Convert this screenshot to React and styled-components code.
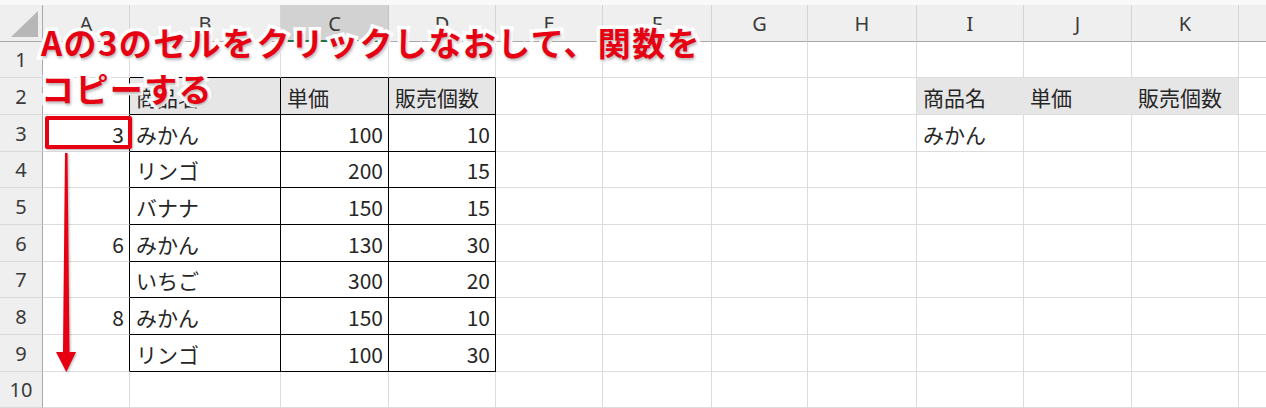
import React from 'react';
import styled, { createGlobalStyle } from 'styled-components';

const GlobalStyle = createGlobalStyle`
  html, body { margin: 0; padding: 0; background: #ffffff; }
  body {
    width: 1266px;
    height: 408px;
    overflow: hidden;
    font-family: "Noto Sans CJK JP", "Noto Sans", sans-serif;
  }
`;

const COLS = ['A', 'B', 'C', 'D', 'E', 'F', 'G', 'H', 'I', 'J', 'K', 'L'];
const COL_W = [87, 151, 108, 107, 107, 109, 96, 109, 107, 108, 107, 110];
const ROW_H = [36, 37, 37, 36, 37, 37, 36, 37, 37, 36];
const SELECTED_COL = 2;

const GRID = '#dcdcdc';
const BLACK = '#000000';
const FILL = '#e7e6e6';

// data[row][col] ; row 0 = sheet row 1
const DATA = [
  {},
  { 1: '商品名', 2: '単価', 3: '販売個数', 8: '商品名', 9: '単価', 10: '販売個数' },
  { 0: 3, 1: 'みかん', 2: 100, 3: 10, 8: 'みかん' },
  { 1: 'リンゴ', 2: 200, 3: 15 },
  { 1: 'バナナ', 2: 150, 3: 15 },
  { 0: 6, 1: 'みかん', 2: 130, 3: 30 },
  { 1: 'いちご', 2: 300, 3: 20 },
  { 0: 8, 1: 'みかん', 2: 150, 3: 10 },
  { 1: 'リンゴ', 2: 100, 3: 30 },
  {},
];

const inTable = (r, c) => r >= 1 && r <= 8 && c >= 1 && c <= 3;
const isFilled = (r, c) => r === 1 && ((c >= 1 && c <= 3) || (c >= 8 && c <= 10));

const Viewport = styled.div`
  position: relative;
  width: 1266px;
  height: 408px;
  overflow: hidden;
  background: #ffffff;
`;

const TopStrip = styled.div`
  height: 5px;
  background: #f9f9f9;
`;

const Grid = styled.div`
  display: grid;
  grid-template-columns: 43px ${COL_W.map((w) => `${w}px`).join(' ')};
  grid-template-rows: 37px ${ROW_H.map((h) => `${h}px`).join(' ')};
  width: max-content;
`;

const Corner = styled.div`
  box-sizing: border-box;
  background: #efefef;
  border-right: 1px solid #a9a9a9;
  border-bottom: 1px solid #a9a9a9;
  display: flex;
  align-items: flex-end;
  justify-content: flex-end;
  padding: 0 4px 4px 0;
`;

const ColHeader = styled.div`
  box-sizing: border-box;
  display: flex;
  align-items: center;
  justify-content: center;
  background: ${(p) => (p.$selected ? '#d2d2d2' : '#efefef')};
  border-right: 1px solid ${(p) => (p.$selected ? '#c2c2c2' : '#d4d4d4')};
  border-bottom: ${(p) => (p.$selected ? '2px solid #217346' : '1px solid #a9a9a9')};
  font-family: "Noto Sans", "Open Sans", sans-serif;
  font-size: 20px;
  color: #3a3a3a;
  padding-top: 1px;
`;

const RowHeader = styled.div`
  box-sizing: border-box;
  display: flex;
  align-items: center;
  justify-content: center;
  background: #efefef;
  border-right: 1px solid #a9a9a9;
  border-bottom: 1px solid #d9d9d9;
  font-family: "Noto Sans", "Open Sans", sans-serif;
  font-size: 20px;
  color: #3a3a3a;
`;

const Cell = styled.div`
  box-sizing: border-box;
  display: flex;
  align-items: center;
  justify-content: ${(p) => (p.$numeric ? 'flex-end' : 'flex-start')};
  padding: 1px 5px 0 6px;
  background: ${(p) => (p.$fill ? FILL : '#ffffff')};
  border-right: 1px solid ${(p) => p.$right};
  border-bottom: 1px solid ${(p) => p.$bottom};
  font-family: "Noto Sans CJK JP", sans-serif;
  font-size: 21px;
  color: #262626;
  white-space: nowrap;
`;

const Callout = styled.div`
  position: absolute;
  left: 41px;
  top: 19px;
  font-family: "Noto Sans CJK JP", sans-serif;
  font-weight: 700;
  font-size: 33px;
  line-height: 46px;
  letter-spacing: 1.4px;
  color: #e60012;
  -webkit-text-stroke: 7px #ffffff;
  paint-order: stroke fill;
  text-shadow: 1px 2px 3px rgba(0, 0, 0, 0.3);
  white-space: pre;
`;

const SelectBox = styled.div`
  position: absolute;
  left: 45px;
  top: 116px;
  width: 87px;
  height: 33px;
  box-sizing: border-box;
  border: 4px solid #e60012;
  border-radius: 2px;
  box-shadow: 1px 1px 2px rgba(0, 0, 0, 0.3);
`;

const ArrowWrap = styled.svg`
  position: absolute;
  left: 55px;
  top: 150px;
  overflow: visible;
`;

function cellBorders(r, c) {
  let right = GRID;
  let bottom = GRID;
  if (inTable(r, c) || inTable(r, c + 1)) right = BLACK;
  else if (isFilled(r, c) && isFilled(r, c + 1)) right = FILL;
  if (inTable(r, c) || inTable(r + 1, c)) bottom = BLACK;
  return { right, bottom };
}

export default function App() {
  const cells = [];
  cells.push(
    <Corner key="corner">
      <svg width="27" height="26" viewBox="0 0 27 26">
        <polygon points="27,0 27,26 0,26" fill="#b7b7b7" />
      </svg>
    </Corner>
  );
  COLS.forEach((c, i) => {
    cells.push(
      <ColHeader key={`h${c}`} $selected={i === SELECTED_COL}>
        {c}
      </ColHeader>
    );
  });
  ROW_H.forEach((_, r) => {
    cells.push(<RowHeader key={`r${r}`}>{r + 1}</RowHeader>);
    COLS.forEach((_, c) => {
      const v = DATA[r][c];
      const { right, bottom } = cellBorders(r, c);
      cells.push(
        <Cell
          key={`c${r}-${c}`}
          $numeric={typeof v === 'number'}
          $fill={isFilled(r, c)}
          $right={right}
          $bottom={bottom}
        >
          {v}
        </Cell>
      );
    });
  });

  return (
    <>
      <GlobalStyle />
      <Viewport>
        <TopStrip />
        <Grid>{cells}</Grid>
        <SelectBox />
        <ArrowWrap width="24" height="224" viewBox="0 0 24 224">
          <g style={{ filter: 'drop-shadow(1px 1px 1px rgba(0,0,0,0.3))' }}>
            <polygon
              points="10,3 12.5,3 14.5,202 21,202 11.3,222 1,202 8,202"
              fill="#e60012"
            />
          </g>
        </ArrowWrap>
        <Callout>{'Aの3のセルをクリックしなおして、関数を\nコピーする'}</Callout>
      </Viewport>
    </>
  );
}
